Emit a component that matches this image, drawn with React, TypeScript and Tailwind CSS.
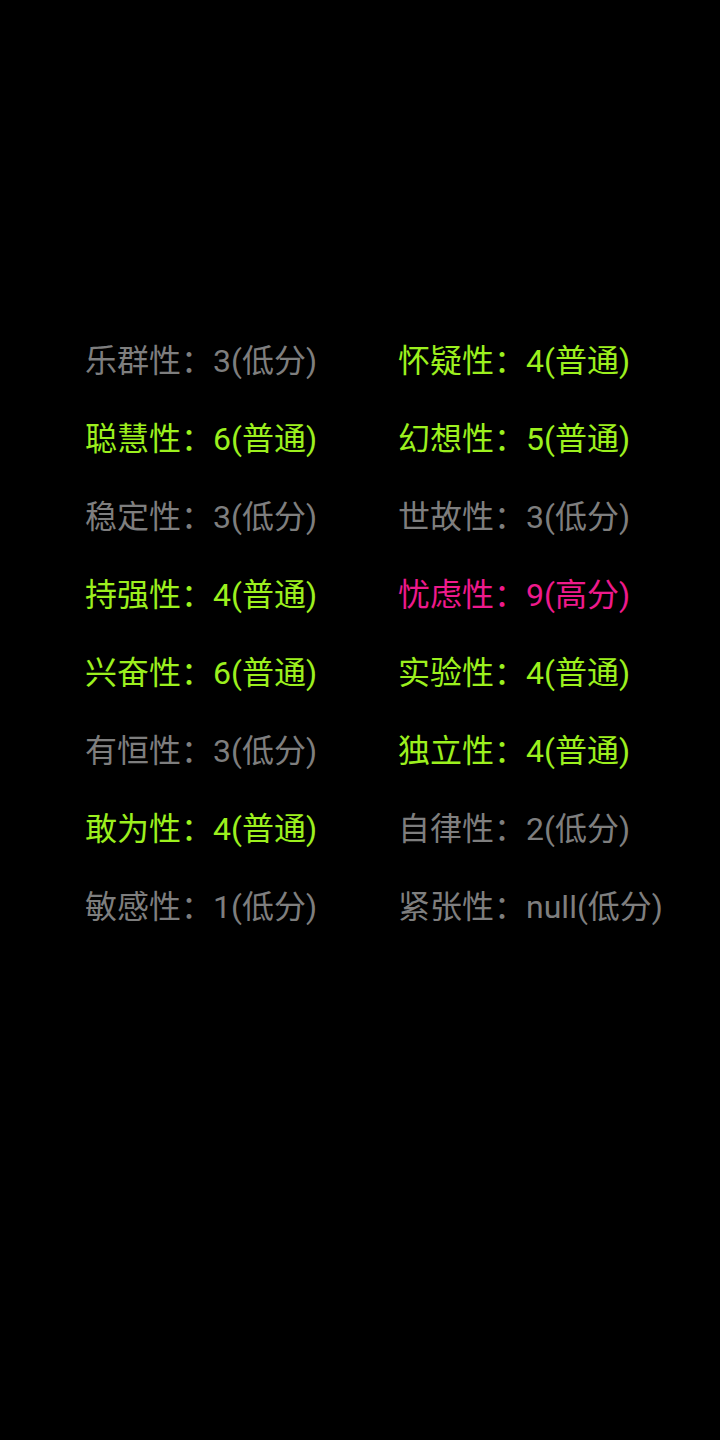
const items: [string, string, "g" | "n" | "h"][] = [
  ["乐群性", "3(低分)", "g"],
  ["怀疑性", "4(普通)", "n"],
  ["聪慧性", "6(普通)", "n"],
  ["幻想性", "5(普通)", "n"],
  ["稳定性", "3(低分)", "g"],
  ["世故性", "3(低分)", "g"],
  ["持强性", "4(普通)", "n"],
  ["忧虑性", "9(高分)", "h"],
  ["兴奋性", "6(普通)", "n"],
  ["实验性", "4(普通)", "n"],
  ["有恒性", "3(低分)", "g"],
  ["独立性", "4(普通)", "n"],
  ["敢为性", "4(普通)", "n"],
  ["自律性", "2(低分)", "g"],
  ["敏感性", "1(低分)", "g"],
  ["紧张性", "null(低分)", "g"],
];

export default function App() {
  return (
    <div
      className="w-[720px] h-[1440px] bg-black"
      style={{ fontFamily: 'Roboto, "Noto Sans CJK SC", sans-serif' }}
    >
      <div className="grid grid-cols-[313px_1fr] pl-[85px] pt-[322px] auto-rows-[78px]">
        {items.map(([k, v, t]) => (
          <div
            key={k}
            className={
              "text-[32px] leading-[78px] h-[78px] whitespace-nowrap " +
              (t === "g"
                ? "text-[#7e7e7e]"
                : t === "n"
                ? "text-[#9cf01e]"
                : "text-[#ee1a8c]")
            }
          >
            {k}：{v}
          </div>
        ))}
      </div>
    </div>
  );
}
